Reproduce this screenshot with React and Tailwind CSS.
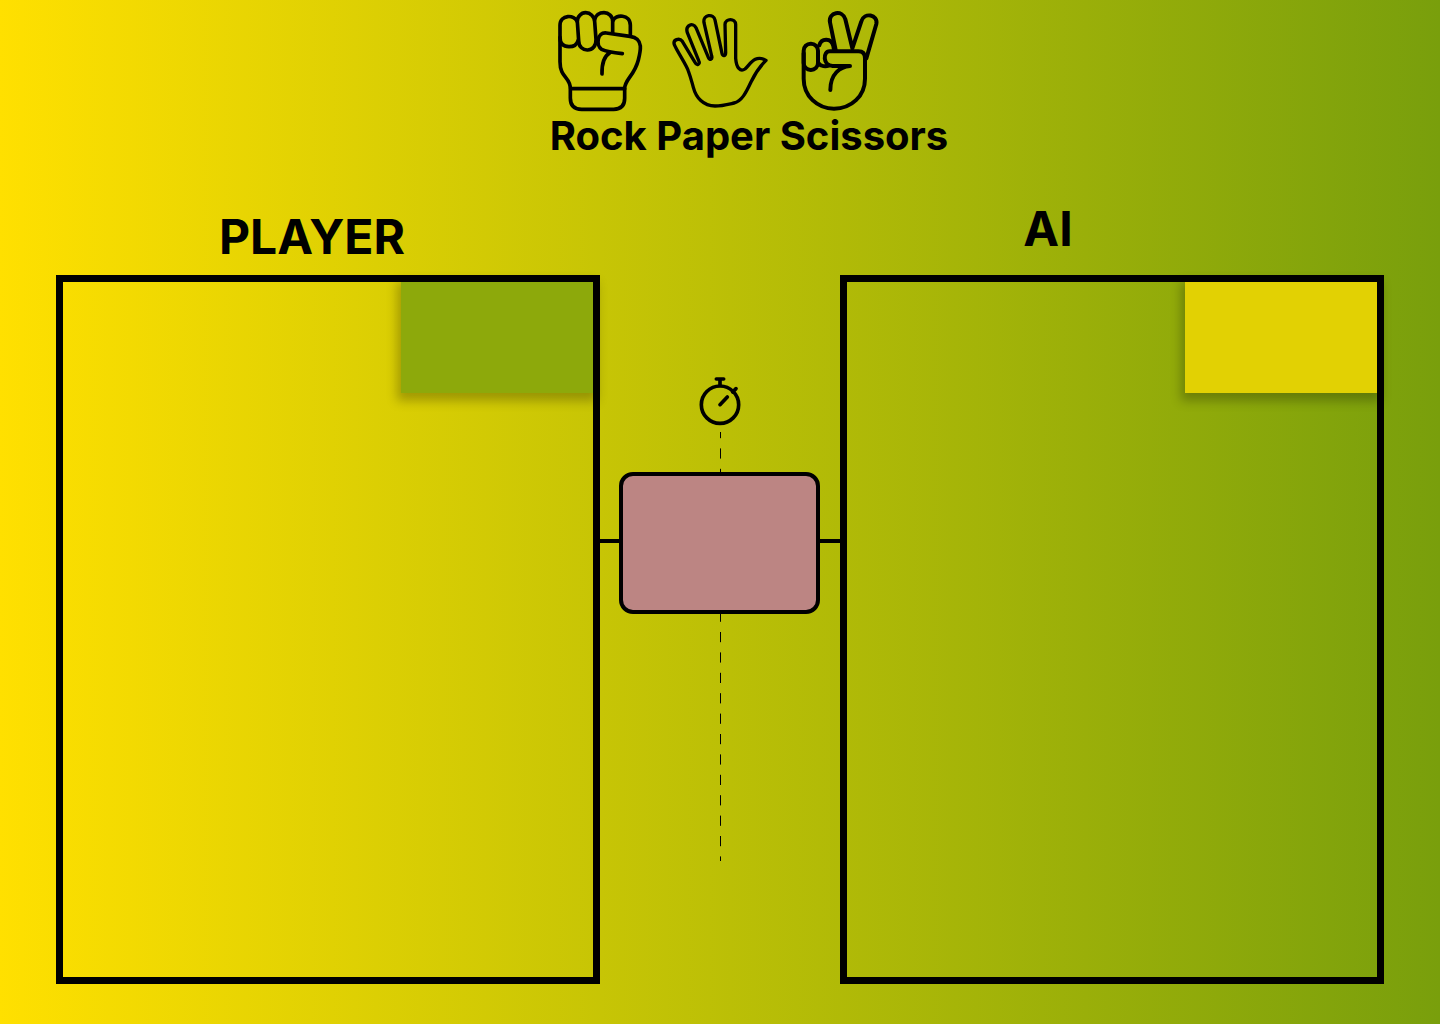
function RockIcon() {
  return (
    <svg className="size-[100px] overflow-visible" viewBox="15 33 300 300" fill="none" stroke="black" strokeWidth="11" strokeLinecap="round" strokeLinejoin="round" role="img" aria-label="Rock">
      <path d="M96 64 C90 44 45 42 45 76 V185 C45 235 76 230 76 266 V294 Q76 328 110 328 H206 Q239 328 239 295 V266 C239 238 268 228 280 180 Q287 152 286 138 C284 120 275 112 255 109 L184 99 C155 96 153 138 170 148 C180 153 195 157 232 161" />
      <path d="M45 112 C45 132 56 140 72 140 C87 140 96 133 99 122" />
      <path d="M97 65 C96 51 108 38 122 38 C136 38 148 50 149 65 L153 118 C155 160 101 160 101 122 Z" />
      <path d="M149 60 C151 46 163 38 177 38 C191 38 203 49 203 64 V98" />
      <path d="M204 62 C211 42 256 42 256 76 V105" />
      <path d="M195 158 C178 168 170 186 171 222" />
      <path d="M77 266 H239" />
    </svg>
  );
}

function PaperIcon() {
  return (
    <svg className="size-[100px]" viewBox="30 33 300 300" fill="none" stroke="black" strokeWidth="10" strokeLinecap="round" strokeLinejoin="round" role="img" aria-label="Paper">
      <path d="M85 213 C80 196 50 152 43 134 C38 119 58 112 67 124 L105 187 C110 198 121 193 117 184 L82 98 C75 75 99 66 108 83 L145 172 C149 182 158 178 155 168 L132 68 C128 43 161 40 165 60 L186 160 C188 170 197 168 197 158 L195 73 C197 54 226 54 227 73 V175 C229 203 241 217 255 207 C270 194 284 162 318 181 C295 204 285 220 273 246 C258 278 245 304 222 309 C200 314 185 318 165 318 C130 318 108 293 100 262 C93 237 92 232 85 213 Z" />
    </svg>
  );
}

function ScissorsIcon() {
  return (
    <svg className="size-[100px] overflow-visible" viewBox="0 33 300 300" fill="none" stroke="black" strokeWidth="12" strokeLinecap="round" strokeLinejoin="round" role="img" aria-label="Scissors">
      <path d="M41 160 V236 C41 288 82 326 132 326 C184 326 225 288 225 236 V175 Q225 154 205 154 H119 C98 154 98 197 128 198 H180 C150 200 121 222 121 270" />
      <rect x="41" y="131" width="43" height="79" rx="21" />
      <path d="M88 136 C94 113 124 113 130 138 L132 150" />
      <path d="M86 190 C92 200 108 200 116 197" />
      <path d="M137 150 L120 67 C114 36 158 28 166 58 L187 145 L214 64 C222 36 265 43 259 72 L229 175" />
    </svg>
  );
}

function StopwatchIcon() {
  return (
    <svg className="h-[52px] w-[50px]" viewBox="15 18 150 156" fill="none" stroke="black" strokeWidth="11" strokeLinecap="round" role="img" aria-label="Timer">
      <circle cx="90" cy="104" r="56" />
      <path d="M79 27 H101 M90 27 V46 M90 104 L112 81 M128 66 L138 56" />
    </svg>
  );
}

function DashedLine({ className, offset }) {
  return (
    <svg className={className} aria-hidden="true">
      <line x1="0.5" y1="0" x2="0.5" y2="100%" stroke="black" strokeWidth="1" strokeDasharray="10.2 10.2" strokeDashoffset={offset} />
    </svg>
  );
}

function Panel({ title, titleClass, badgeClass }) {
  return (
    <section className="flex flex-col">
      <h2 className={`text-center text-5xl leading-[58px] font-bold ${titleClass}`}>{title}</h2>
      <div className="flex flex-1 items-start justify-end border-7 border-black">
        <div className={`h-[111px] w-48 shadow-[0_4px_10px_4px_rgba(0,0,0,0.25)] ${badgeClass}`} />
      </div>
    </section>
  );
}

export default function App() {
  return (
    <div className="flex min-h-screen flex-col bg-[linear-gradient(90deg,#ffe000,#799f0c)] px-14 pb-10 font-['Inter',sans-serif] text-black">
      <header className="flex justify-center pt-[11px] pl-[58px]">
        <div>
          <div className="flex gap-5">
            <RockIcon />
            <PaperIcon />
            <ScissorsIcon />
          </div>
          <h1 className="text-[40px] leading-[50px] font-bold whitespace-nowrap">Rock Paper Scissors</h1>
        </div>
      </header>
      <main className="mt-[39px] grid flex-1 grid-cols-[1fr_240px_1fr]">
        <Panel title="PLAYER" titleClass="pt-2 pr-8 pb-[9px]" badgeClass="bg-[#8da90b]" />
        <div className="flex flex-col items-center pt-44">
          <StopwatchIcon />
          <DashedLine className="mt-1 h-10 w-px" offset="4" />
          <div className="flex w-full items-center">
            <div className="mb-1 h-1 w-[19px] bg-black" />
            <div className="h-[142px] flex-1 rounded-[14px] border-4 border-black bg-[#bc8583]" />
            <div className="mb-1 h-1 w-5 bg-black" />
          </div>
          <DashedLine className="h-[247px] w-px" offset="186" />
        </div>
        <Panel title="AI" titleClass="pr-32 pb-[17px]" badgeClass="bg-[#e2d103]" />
      </main>
    </div>
  );
}
